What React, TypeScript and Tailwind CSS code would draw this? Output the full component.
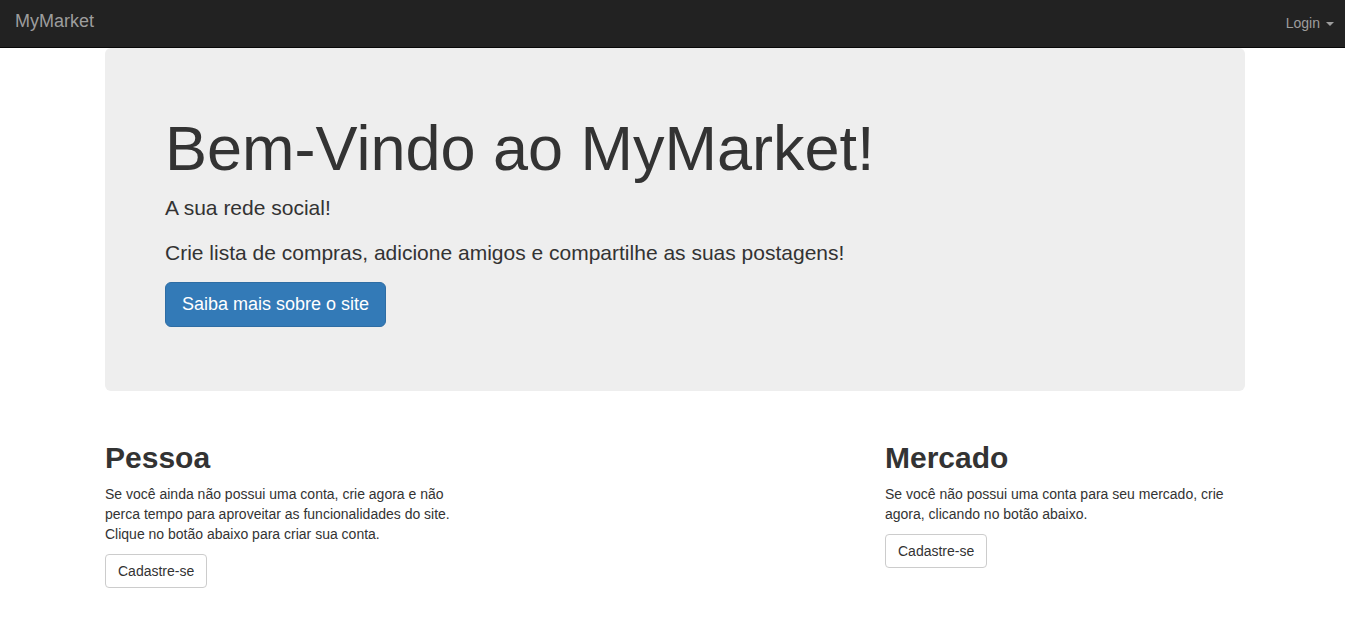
import React from "react";

const font = { fontFamily: '"Liberation Sans", Arial, sans-serif' };

interface CardProps {
  title: string;
  text: string;
}

const SignupCol: React.FC<CardProps> = ({ title, text }) => {
  return (
    <div className="w-[360px]">
      <h2 className="mt-5 mb-[10px] text-[30px] leading-[33px] font-bold text-[#333]">{title}</h2>
      <p className="mb-[10px] text-[14px] leading-[20px] text-[#333]">{text}</p>
      <button className="h-[34px] px-3 rounded-[4px] border border-[#ccc] bg-white text-[14px] text-[#333]">
        Cadastre-se
      </button>
    </div>
  );
};

export default function App() {
  return (
    <div className="min-h-screen bg-white" style={font}>
      {/* NAVBAR */}
      <nav className="h-[48px] bg-[#222] border-b border-[#080808] flex items-start justify-between">
        <a className="pl-[15px] pt-[11px] text-[18px] leading-[20px] text-[#9d9d9d]">MyMarket</a>
        <a className="pr-[11px] pt-[13px] text-[14px] leading-[20px] text-[#9d9d9d] flex items-center">
          Login
          <span className="ml-[6px] mt-[1px] w-0 h-0 border-x-[4px] border-x-transparent border-t-[4px] border-t-[#9d9d9d]" />
        </a>
      </nav>

      <div className="ml-[105px] w-[1140px]">
        {/* JUMBOTRON */}
        <div className="bg-[#eee] rounded-[6px] px-[60px] pt-[46px] pb-[49px] mb-[30px] text-[#333]">
          <h1 className="mt-5 mb-[10px] text-[63px] leading-[69px]">Bem-Vindo ao MyMarket!</h1>
          <p className="mb-[15px] text-[21px] leading-[30px]">A sua rede social!</p>
          <p className="mb-[14px] text-[21px] leading-[30px]">
            Crie lista de compras, adicione amigos e compartilhe as suas postagens!
          </p>
          <div className="mb-[15px]">
            <button className="h-[45px] w-[221px] rounded-[6px] bg-[#337ab7] border border-[#2e6da4] text-white text-[18px]">
              Saiba mais sobre o site
            </button>
          </div>
        </div>

        {/* COLUNAS */}
        <div className="flex justify-between">
          <SignupCol
            title="Pessoa"
            text="Se você ainda não possui uma conta, crie agora e não perca tempo para aproveitar as funcionalidades do site. Clique no botão abaixo para criar sua conta."
          />
          <SignupCol
            title="Mercado"
            text="Se você não possui uma conta para seu mercado, crie agora, clicando no botão abaixo."
          />
        </div>
      </div>
    </div>
  );
}
